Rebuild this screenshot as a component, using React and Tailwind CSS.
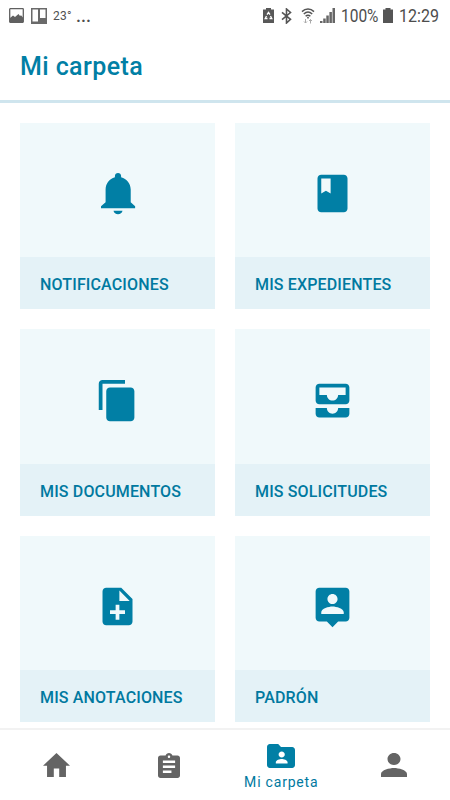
const cards = [
  {
    title: "NOTIFICACIONES",
    path: "M12.270 1.100c.9 0 1.650.7 1.650 1.600v.6c3 .8 5.130 3.400 5.130 6.600v6.700l2.350 2.200v1H3.200v-1l2.450-2.200v-6.700c0-3.200 2-5.800 4.970-6.600v-.6c0-.9.75-1.600 1.650-1.600zM9.870 21.200h4.800c-.2 1.100-1.200 1.900-2.400 1.900s-2.200-.8-2.400-1.900z",
  },
  {
    title: "MIS EXPEDIENTES",
    path: "M18 2H6c-1.100 0-2 .9-2 2v16c0 1.100.9 2 2 2h12c1.100 0 2-.9 2-2V4c0-1.100-.9-2-2-2zM6 4h5v8l-2.500-1.500L6 12V4z",
  },
  {
    title: "MIS DOCUMENTOS",
    path: "M16 1H4c-1.100 0-2 .9-2 2v14h2V3h12V1zM19 5H8c-1.100 0-2 .9-2 2v14c0 1.100.9 2 2 2h11c1.100 0 2-.9 2-2V7c0-1.100-.9-2-2-2z",
  },
  {
    title: "MIS SOLICITUDES",
    path: "M19 3H5c-1.100 0-2 .9-2 2v7c0 1.100.9 2 2 2h14c1.100 0 2-.9 2-2V5c0-1.100-.9-2-2-2zm0 6h-4c0 1.620-1.380 3-3 3s-3-1.380-3-3H5V5h14v4zm-4 7h6v3c0 1.100-.9 2-2 2H5c-1.100 0-2-.9-2-2v-3h6c0 1.660 1.340 3 3 3s3-1.340 3-3z",
  },
  {
    title: "MIS ANOTACIONES",
    path: "M14 2H6c-1.100 0-1.990.9-1.990 2L4 20c0 1.100.89 2 1.990 2H18c1.100 0 2-.9 2-2V8l-6-6zm2 14h-3v3h-2v-3H8v-2h3v-3h2v3h3v2zm-3-7V3.500L18.500 9H13z",
  },
  {
    title: "PADRÓN",
    path: "M19 2H5c-1.110 0-2 .9-2 2v14c0 1.100.89 2 2 2h4l3 3 3-3h4c1.100 0 2-.9 2-2V4c0-1.100-.9-2-2-2zm-7 3.300c1.490 0 2.700 1.210 2.700 2.700 0 1.490-1.210 2.700-2.700 2.700-1.490 0-2.700-1.210-2.700-2.700 0-1.490 1.210-2.700 2.700-2.700zM18 16H6v-.9c0-2 4-3.100 6-3.100s6 1.100 6 3.100v.9z",
  },
];

const Card = ({ title, path }) => {
  return (
    <div className="flex flex-col bg-[#f0f9fb]">
      <div className="flex flex-1 items-center justify-center pt-[7px]">
        <svg viewBox="0 0 24 24" className="h-[45px] w-[45px] fill-[#017fa5]">
          <path d={path} />
        </svg>
      </div>
      <div className="flex h-[52px] items-center bg-[#e4f2f7] px-5 pt-[3px] text-base font-medium tracking-[0.15px] text-[#0079a0]">
        {title}
      </div>
    </div>
  );
};

const StatusBar = () => {
  return (
    <div className="flex h-[30px] shrink-0 items-center pt-px pl-[9px] text-[#4d4d4d]">
      <svg viewBox="0 0 15 15" className="h-[15px] w-[15px] shrink-0" fill="none" stroke="#606060">
        <rect x="0.700" y="0.700" width="13.600" height="13.600" rx="0.500" strokeWidth="1.300" />
        <path d="M1 10l3-2.500 2 1.500 3.500-3L11 8l1-.7 2 2.200V14H1z" fill="#606060" stroke="none" />
      </svg>
      <svg viewBox="0 0 16 16" className="ml-[7px] h-4 w-4 shrink-0">
        <path fillRule="evenodd" fill="#6a6a6a" d="M0 0h16v16H0zM1.500 1.500v12H7v-12zM9 1.500v8.500h5.500V1.500z" />
      </svg>
      <span className="ml-1.5 w-[18px] text-[12px] leading-none tracking-[0.3px] text-[#505050]">23°</span>
      <span className="ml-[5px] text-lg leading-none font-medium">...</span>

      <div className="ml-auto flex items-center pr-[10px]">
        <svg viewBox="0 0 11 15" className="h-[15px] w-[11px]">
          <path d="M3 0h5v1.500h3V15H0V1.500h3z" fill="#585858" />
          <path d="M4 6.700L5.500 4.500 7 6.700M7.500 8l1.300 2.500H6.500M3.500 8l-1.300 2.500h2.300" fill="none" stroke="#fff" strokeWidth="1.300" />
        </svg>
        <svg viewBox="0 0 11 16" className="ml-[7px] h-4 w-[11px]" fill="none" stroke="#555" strokeWidth="1.600">
          <path d="M1 4.300l8.500 7L5.500 15V1l4 3.500L1 11.700" />
        </svg>
        <svg viewBox="0 0 14 16" className="ml-[9px] h-4 w-[14px]" fill="none" stroke="#555" strokeWidth="1.500">
          <path d="M1 3.600c3.500-3.400 8.500-3.400 12 0M2.800 6c2.500-2.300 5.900-2.300 8.400 0M4.600 8.200c1.500-1.300 3.300-1.300 4.800 0" />
          <circle cx="7" cy="9.700" r="0.900" fill="#555" stroke="none" />
          <path d="M4.500 11v4M3 13.500l1.500 1.500L6 13.500M9.500 15.500v-4M8 13l1.500-1.500L11 13" stroke="#aaa" strokeWidth="1" />
        </svg>
        <svg viewBox="0 0 15 15" className="ml-[5px] h-[15px] w-[15px]" fill="#666">
          <path d="M0 15v-2h2.500v2zM3.200 15v-4.500h2.500V15zM6.300 15V7.500h2.500V15zM9.400 15V4h2.500v11zM12.500 15V0H15v15z" />
        </svg>
        <span className="ml-[6px] w-[39px] text-lg leading-none whitespace-nowrap">
          <span className="inline-block origin-left scale-x-[0.86]">100%</span>
        </span>
        <svg viewBox="0 0 10 15" className="ml-[3px] h-[15px] w-[10px]" fill="#555">
          <path d="M2.500 0h5v1.500H10V15H0V1.500h2.500z" />
        </svg>
        <span className="ml-[6px] w-[41px] text-lg leading-none whitespace-nowrap">
          <span className="inline-block origin-left scale-x-[0.89]">12:29</span>
        </span>
      </div>
    </div>
  );
};

const BottomNav = () => {
  return (
    <nav className="grid h-[72px] shrink-0 grid-cols-4 border-t-2 border-[#f2f2f2] bg-white">
      <div className="flex items-center justify-center">
        <svg viewBox="2 3 20 17" preserveAspectRatio="none" className="h-6 w-[27px] fill-[#646464]">
          <path d="M10 20v-6h4v6h5v-8h3L12 3 2 12h3v8z" />
        </svg>
      </div>
      <div className="flex items-center justify-center pt-px">
        <svg viewBox="3 1 18 20" preserveAspectRatio="none" className="h-[25px] w-[22px] fill-[#646464]">
          <path d="M19 3h-4.180C14.400 1.840 13.300 1 12 1c-1.300 0-2.400.84-2.820 2H5c-1.100 0-2 .9-2 2v14c0 1.100.9 2 2 2h14c1.100 0 2-.9 2-2V5c0-1.100-.9-2-2-2zm-7 0c.55 0 1 .45 1 1s-.45 1-1 1-1-.45-1-1 .45-1 1-1zm2 14H7v-2h7v2zm3-4H7v-2h10v2zm0-4H7V7h10v2z" />
        </svg>
      </div>
      <div className="flex flex-col items-center pt-[14px]">
        <svg viewBox="2 4 20 16" preserveAspectRatio="none" className="h-6 w-7 fill-[#017fa5]">
          <path d="M20 6h-8l-2-2H4c-1.100 0-1.990.9-1.990 2L2 18c0 1.100.9 2 2 2h16c1.100 0 2-.9 2-2V8c0-1.100-.9-2-2-2zm-7.500 3c1.300 0 2.200.9 2.200 2s-.9 2-2.200 2-2.200-.9-2.200-2 .9-2 2.200-2zm4.200 8H8.300v-.8c0-1.400 2.800-2.200 4.200-2.200s4.200.8 4.200 2.200v.8z" />
        </svg>
        <span className="mt-[5px] text-sm leading-[18px] tracking-[0.8px] text-[#0079a0]">Mi carpeta</span>
      </div>
      <div className="flex items-center justify-center">
        <svg viewBox="4 4 16 16" preserveAspectRatio="none" className="h-6 w-[26px] fill-[#646464]">
          <path d="M12 12c2.210 0 4-1.790 4-4s-1.790-4-4-4-4 1.790-4 4 1.790 4 4 4zm0 2c-2.670 0-8 1.340-8 4v2h16v-2c0-2.660-5.330-4-8-4z" />
        </svg>
      </div>
    </nav>
  );
};

const App = () => {
  return (
    <div className="flex h-[800px] w-[450px] flex-col overflow-hidden bg-white font-['Roboto',sans-serif]">
      <StatusBar />
      <header className="flex h-[73px] shrink-0 items-center border-b-[3px] border-[#cfe5ee] px-5 pt-1">
        <h1 className="text-[25px] font-medium tracking-[0.4px] text-[#017fa5]">Mi carpeta</h1>
      </header>
      <main className="grid flex-1 grid-cols-2 grid-rows-[186px_187px_186px] gap-5 px-5 pt-5">
        {cards.map((card) => (
          <Card key={card.title} {...card} />
        ))}
      </main>
      <BottomNav />
    </div>
  );
};

export default App;
